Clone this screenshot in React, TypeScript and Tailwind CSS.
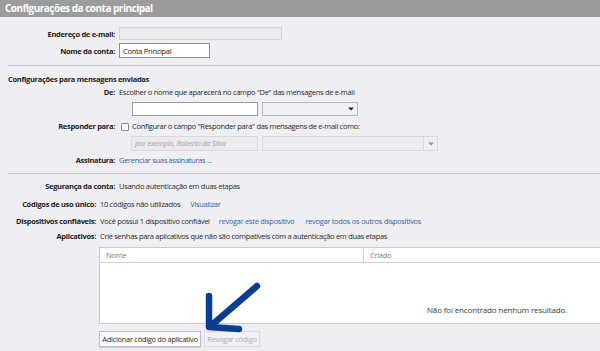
import React from 'react';

type RowProps = {
  label: string;
  labelWidth?: string;
  className?: string;
  children?: React.ReactNode;
};

const Row = ({ label, labelWidth = 'w-[119px]', className = '', children }: RowProps) => {
  return (
    <div className={`flex items-center leading-[10px] ${className}`}>
      <span className={`${labelWidth} shrink-0 text-right font-bold pr-[4px] text-[#222] whitespace-nowrap`}>{label}</span>
      <div className="flex items-center whitespace-nowrap">{children}</div>
    </div>
  );
};

const Link = ({ children, className = '' }: { children: React.ReactNode; className?: string }) => (
  <a className={`text-[#2f64a8] cursor-pointer ${className}`}>{children}</a>
);

const Caret = ({ color = '#222' }: { color?: string }) => (
  <svg width="6" height="4" viewBox="0 0 6 4">
    <path d="M0 0.5 L6 0.5 L3 3.5 Z" fill={color} />
  </svg>
);

const App = () => {
  return (
    <div className="relative w-[600px] h-[351px] overflow-hidden bg-[#efeef3] text-[7.5px] tracking-[-0.3px] text-[#2a2a2a] font-['Open_Sans','Noto_Sans',sans-serif]">
      <div className="h-[17px] bg-[#9c9c9c] pl-[5px] flex items-center text-white font-bold text-[10px] tracking-[-0.5px]">
        Configurações da conta principal
      </div>

      <div className="mt-[10px] flex flex-col">
        <Row label="Endereço de e-mail:">
          <div className="w-[163px] h-[13px] border border-[#d3d3d8] bg-[#ebeaef]" />
        </Row>
        <Row label="Nome da conta:" className="mt-[3px]">
          <div className="w-[91px] h-[15px] border border-[#8f8f8f] bg-white px-[3px] flex items-center text-[#222]">
            Conta Principal
          </div>
        </Row>
      </div>

      <div className="ml-[8px] mt-[7px] h-px bg-[#c6c6c9]" />

      <div className="ml-[8px] mt-[8px] leading-[10px] font-bold text-[#222]">Configurações para mensagens enviadas</div>

      <Row label="De:" className="mt-[3px]">
        <span>Escolher o nome que aparecerá no campo "De" das mensagens de e-mail</span>
      </Row>
      <div className="flex mt-[5px] pl-[132px] gap-[4px]">
        <div className="w-[126px] h-[14px] border border-[#9a9a9a] bg-white" />
        <div className="w-[96px] h-[14px] border border-[#b9b9bd] bg-[#f1f0f4] flex items-center justify-end pr-[3px]">
          <Caret />
        </div>
      </div>

      <Row label="Responder para:" className="mt-[5px]">
        <span className="w-[8px] h-[8px] border border-[#8a8a8a] bg-white rounded-[1px] ml-[2px] mr-[3px] mt-[1px]" />
        <span>Configurar o campo "Responder para" das mensagens de e-mail como:</span>
      </Row>
      <div className="flex mt-[5px] pl-[131px] gap-[4px]">
        <div className="w-[127px] h-[15px] border border-[#d9d9dd] bg-[#ecebf0] px-[3px] flex items-center italic text-[#a6a6ab]">
          por exemplo, Roberto da Silva
        </div>
        <div className="flex h-[15px]">
          <div className="w-[162px] border border-[#d9d9dd] bg-[#ecebf0]" />
          <div className="w-[14px] border border-l-0 border-[#d9d9dd] bg-[#efeef3] flex items-center justify-center">
            <Caret color="#9a9a9e" />
          </div>
        </div>
      </div>

      <Row label="Assinatura:" className="mt-[4px]">
        <Link>Gerenciar suas assinaturas ...</Link>
      </Row>

      <div className="ml-[8px] mt-[8px] h-px bg-[#c6c6c9]" />

      <Row label="Segurança da conta:" className="mt-[7px]">
        <span>Usando autenticação em duas etapas</span>
      </Row>
      <Row label="Códigos de uso único:" labelWidth="w-[100px]" className="mt-[8px]">
        <span>10 códigos não utilizados</span>
        <Link className="ml-[10px]">Visualizar</Link>
      </Row>
      <Row label="Dispositivos confiáveis:" labelWidth="w-[100px]" className="mt-[7px]">
        <span>Você possui 1 dispositivo confiável</span>
        <Link className="ml-[9px]">revogar este dispositivo</Link>
        <Link className="ml-[11px]">revogar todos os outros dispositivos</Link>
      </Row>
      <Row label="Aplicativos:" labelWidth="w-[100px]" className="mt-[5px]">
        <span>Crie senhas para aplicativos que não são compatíveis com a autenticação em duas etapas</span>
      </Row>

      <div className="ml-[99px] mt-[6px] w-[510px] h-[77px] border border-[#c9c9cc] bg-white flex flex-col">
        <div className="h-[15px] flex border-b border-[#cfcfd2] text-[#7d7d7d] leading-[14px]">
          <div className="w-[264px] pl-[6px] border-r border-[#cfcfd2]">Nome</div>
          <div className="pl-[6px]">Criado</div>
        </div>
        <div className="flex-1 flex items-end pb-[7px]">
          <span className="ml-[327px] text-[8px] tracking-[-0.15px] text-[#3a3a3a]">Não foi encontrado nenhum resultado.</span>
        </div>
      </div>

      <div className="flex ml-[99px] mt-[7px] gap-[3px]">
        <button className="h-[16px] w-[102px] border border-[#bdbdc1] bg-[#fafafa] shadow-[0_1px_1px_rgba(0,0,0,0.12)] text-[#2a2a2a] leading-[14px]">
          Adicionar código do aplicativo
        </button>
        <button className="h-[16px] w-[56px] border border-[#dadade] bg-[#f2f1f5] text-[#adadb1] leading-[14px]">
          Revogar código
        </button>
      </div>

      <svg className="absolute left-0 top-0 pointer-events-none" width="600" height="351" viewBox="0 0 600 351">
        <g stroke="#0b3d8f" strokeWidth="6.5" strokeLinecap="round" strokeLinejoin="round" fill="none">
          <path d="M257 286 L213 324" />
          <path d="M209 296 L209 327 L239 329" />
        </g>
      </svg>
    </div>
  );
};

export default App;
